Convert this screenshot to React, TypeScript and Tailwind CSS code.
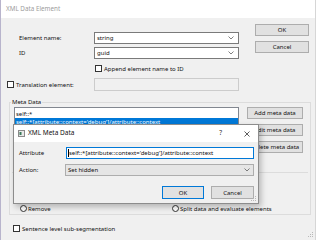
import React from "react";

function Chevron() {
  return (
    <svg width="6" height="4" viewBox="0 0 6 4" className="shrink-0">
      <polyline points="0.5,0.5 3,3 5.5,0.5" fill="none" stroke="#606060" strokeWidth="0.8" />
    </svg>
  );
}

function Combo({ value }: { value: string }) {
  return (
    <div className="w-[145px] h-[12px] bg-white border border-[#7a7a7a] flex items-center justify-between pl-[2px] pr-[4px]">
      <span>{value}</span>
      <Chevron />
    </div>
  );
}

function Check() {
  return <div className="w-[7px] h-[7px] bg-white border border-[#333333] shrink-0" />;
}

function Radio() {
  return <div className="w-[7px] h-[7px] bg-white border border-[#333333] rounded-full shrink-0" />;
}

function Btn({ label, w, focus }: { label: string; w: string; focus?: boolean }) {
  return (
    <div
      className={
        "h-[12px] flex items-center justify-center bg-[#e1e1e1] border " +
        (focus ? "border-[#0078d7] " : "border-[#adadad] ") +
        w
      }
    >
      {label}
    </div>
  );
}

function Grip() {
  return (
    <svg width="6" height="6" viewBox="0 0 6 6">
      <rect x="4" y="0" width="1" height="1" fill="#b8b8b8" />
      <rect x="2" y="2" width="1" height="1" fill="#b8b8b8" />
      <rect x="4" y="2" width="1" height="1" fill="#b8b8b8" />
      <rect x="0" y="4" width="1" height="1" fill="#b8b8b8" />
      <rect x="2" y="4" width="1" height="1" fill="#b8b8b8" />
      <rect x="4" y="4" width="1" height="1" fill="#b8b8b8" />
    </svg>
  );
}

export default function App() {
  return (
    <div className="relative w-[316px] h-[240px] overflow-hidden bg-[#f0f0f0] text-[6px] leading-none text-[#111111] font-['Noto_Sans',sans-serif] border-l border-l-[#b8b4cc] border-r border-r-[#d6d6d6]">
      {/* title bar */}
      <div className="h-[18px] bg-white flex items-center pl-[5px] text-[6.3px] text-[#9c9c9c]">XML Data Element</div>

      {/* top form */}
      <div className="flex">
        <div className="w-[238px] pl-[6px]">
          <div className="mt-[14px] h-[12px] flex items-center">
            <span className="w-[87px] pl-[12px]">Element name:</span>
            <Combo value="string" />
          </div>
          <div className="mt-[3px] h-[12px] flex items-center">
            <span className="w-[87px] pl-[12px]">ID</span>
            <Combo value="guid" />
          </div>
          <div className="mt-[6px] h-[7px] flex items-center gap-[2px] pl-[88px]">
            <Check />
            <span>Append element name to ID</span>
          </div>
          <div className="mt-[6px] h-[13px] flex items-center">
            <div className="w-[87px] flex items-center gap-[2px]">
              <Check />
              <span>Translation element:</span>
            </div>
            <div className="w-[145px] h-[13px] border border-[#cccccc] bg-[#f0f0f0]" />
          </div>
        </div>
        <div className="ml-[16px] pt-[6px] flex flex-col gap-[5px]">
          <Btn label="OK" w="w-[54px]" />
          <Btn label="Cancel" w="w-[54px]" />
        </div>
      </div>

      {/* Meta Data group */}
      <div className="relative ml-[8px] mt-[11px] w-[302px] h-[113px] border border-[#dcdcdc]">
        <span className="absolute -top-[4px] left-[1px] px-[1px] bg-[#f0f0f0]">Meta Data</span>
        <div className="flex pt-[4px] pl-[4px]">
          <div className="w-[225px] h-[55px] bg-white border border-[#828790] pt-[2px]">
            <div className="h-[8px] flex items-center pl-[1px]">self::*</div>
            <div className="h-[8px] flex items-center pl-[1px] bg-[#0078d7] text-white">
              self::*[attribute::context='debug']/attribute::context
            </div>
          </div>
          <div className="ml-[8px] flex flex-col gap-[5px]">
            <Btn label="Add meta data" w="w-[56px]" />
            <Btn label="Edit meta data" w="w-[56px]" />
            <Btn label="Delete meta data" w="w-[56px]" />
          </div>
        </div>
        <div className="mx-[2px] mt-[10px] border-t border-[#dcdcdc]">
          <div className="mt-[32px] h-[7px] flex items-center">
            <div className="ml-[8px] w-[152px] flex items-center gap-[1px]">
              <Radio />
              <span>Remove</span>
            </div>
            <div className="flex items-center gap-[1px]">
              <Radio />
              <span>Split data and evaluate elements</span>
            </div>
          </div>
        </div>
      </div>

      {/* sentence */}
      <div className="mt-[10px] ml-[12px] h-[7px] flex items-center gap-[2px]">
        <Check />
        <span>Sentence level sub-segmentation</span>
      </div>

      {/* window grip */}
      <div className="absolute right-[1px] bottom-[2px]">
        <Grip />
      </div>

      {/* Modal dialog */}
      <div className="absolute left-[12px] top-[124px] w-[246px] h-[80px] border border-[#8c8c8c] bg-[#f0f0f0] shadow-[2px_3px_6px_rgba(0,0,0,0.25)]">
        <div className="h-[17px] bg-white flex items-center pl-[4px] text-[6.5px]">
          <svg width="7" height="7" viewBox="0 0 7 7" className="shrink-0">
            <rect x="0.5" y="0.5" width="6" height="6" fill="#e8e8e8" stroke="#8a8a8a" strokeWidth="1" />
            <rect x="1.5" y="2" width="2" height="3" fill="#3a7a5a" />
          </svg>
          <span className="ml-[3px]">XML Meta Data</span>
          <span className="ml-auto mr-[22px] text-[#333333]">?</span>
          <svg width="6" height="6" viewBox="0 0 6 6" className="mr-[8px]">
            <line x1="0.5" y1="0.5" x2="5.5" y2="5.5" stroke="#333333" strokeWidth="0.8" />
            <line x1="5.5" y1="0.5" x2="0.5" y2="5.5" stroke="#333333" strokeWidth="0.8" />
          </svg>
        </div>
        <div className="pt-[5px] pl-[5px] pr-[4px]">
          <div className="h-[12px] flex items-center">
            <span className="w-[47px]">Attribute</span>
            <div className="flex-1 h-[12px] bg-white border border-[#0078d7] flex items-center pl-[1px]">
              <div className="w-[0.5px] h-[8px] bg-black mr-[0.5px]" />
              <span>self::*[attribute::context='debug']/attribute::context</span>
            </div>
          </div>
          <div className="mt-[5px] h-[12px] flex items-center">
            <span className="w-[46px]">Action:</span>
            <div className="flex-1 h-[12px] bg-[#e5e5e5] border border-[#adadad] flex items-center justify-between pl-[2px] pr-[3px]">
              <span>Set hidden</span>
              <Chevron />
            </div>
          </div>
          <div className="mt-[10px] flex justify-end gap-[7px]">
            <Btn label="OK" w="w-[42px] h-[13px]" focus />
            <Btn label="Cancel" w="w-[43px] h-[13px]" />
          </div>
        </div>
        <div className="absolute right-[1px] bottom-[1px]">
          <Grip />
        </div>
      </div>
    </div>
  );
}
